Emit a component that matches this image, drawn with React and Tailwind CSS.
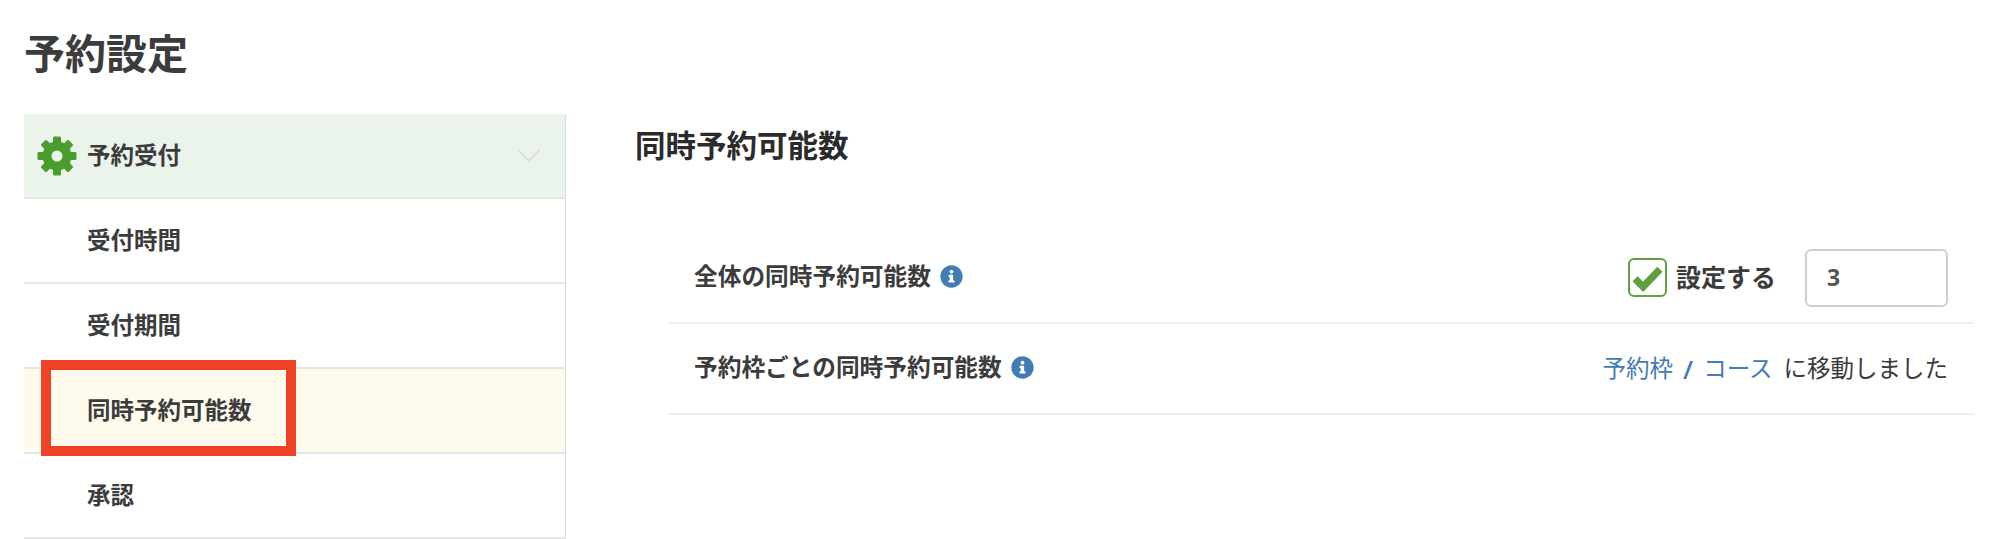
import { ChevronDown } from 'lucide-react'

const FONT = "font-['Open_Sans','Noto_Sans_CJK_JP',sans-serif]"

const INFO = 'M256 8C119 8 8 119.1 8 256c0 137 111 248 248 248s248-111 248-248C504 119.1 393 8 256 8zm0 100c23.2 0 42 18.8 42 42s-18.8 42-42 42-42-18.8-42-42 18.8-42 42-42zm66 272c0 6.6-5.4 12-12 12H202c-6.6 0-12-5.4-12-12v-28c0-6.6 5.4-12 12-12h16v-70h-16c-6.6 0-12-5.4-12-12v-28c0-6.6 5.4-12 12-12h78c6.6 0 12 5.4 12 12v110h18c6.6 0 12 5.4 12 12v28z'

const TEETH = [0, 45, 90, 135, 180, 225, 270, 315]

function GearIcon() {
  return (
    <svg viewBox="0 0 40 40" className="w-[40px] h-[40px] shrink-0">
      {TEETH.map((deg) => (
        <rect key={deg} x="16" y="0.5" width="8" height="9" rx="1.5" className="fill-[#4a9d2c]" transform={`rotate(${deg} 20 20)`} />
      ))}
      <circle cx="20" cy="20" r="10" className="fill-none stroke-[#4a9d2c] stroke-[9]" />
    </svg>
  )
}

function InfoIcon() {
  return (
    <svg viewBox="0 0 512 512" className="w-[23px] h-[23px] fill-[#427bb5] shrink-0">
      <path d={INFO} />
    </svg>
  )
}

function MenuItem({ label, active }) {
  return (
    <div className={`h-[85px] flex items-center pl-[63px] border-b-2 border-[#e6e6e6] text-[23.5px] font-bold ${active ? 'bg-[#fffbec]' : 'bg-white'}`}>
      {label}
    </div>
  )
}

export default function App() {
  return (
    <div className={`${FONT} w-[1999px] h-[539px] bg-white text-[#3c3c3c] overflow-hidden`}>
      <h1 className="pl-[24px] h-[114px] pt-[28px] text-[41px] leading-[50px] font-bold">予約設定</h1>
      <div className="flex">
        <div className="relative w-[542px] ml-[24px] border-r border-[#dcdcdc]">
          <div className="h-[85px] flex items-center justify-between pl-[13px] pr-[16px] bg-[#eaf4ea] border-b-2 border-[#e2e8e2]">
            <div className="flex items-center gap-[10px]">
              <GearIcon />
              <span className="text-[23.5px] font-bold">予約受付</span>
            </div>
            <ChevronDown className="w-[40px] h-[40px] text-[#dddddd]" strokeWidth={1.25} />
          </div>
          <MenuItem label="受付時間" />
          <MenuItem label="受付期間" />
          <MenuItem label="同時予約可能数" active />
          <MenuItem label="承認" />
          <div className="absolute left-[17px] top-[246px] w-[255px] h-[96px] border-[10px] border-[#ee4327]" />
        </div>

        <div className="flex-1 pl-[69px] pr-[25px]">
          <h2 className="h-[125px] pt-[11px] text-[30.5px] leading-[40px] font-bold text-[#2b2b2b]">同時予約可能数</h2>
          <div className="ml-[33px]">
            <div className="h-[85px] pb-[6px] flex items-center justify-between pl-[26px] pr-[26px] border-b-2 border-[#eeeeee]">
              <div className="flex items-center gap-[9px] pb-[1px] text-[23.7px] font-bold">
                全体の同時予約可能数
                <InfoIcon />
              </div>
              <div className="flex items-center">
                <div className="w-[39px] h-[39px] rounded-[6px] border-2 border-[#5f9f3f] flex items-center justify-center">
                  <svg viewBox="0 0 24 24" className="w-[36px] h-[36px] fill-none stroke-[#5f9f3f] stroke-[5]">
                    <path d="M3.5 12.5l5.5 5.5L20.5 6" />
                  </svg>
                </div>
                <span className="ml-[9px] text-[25px] font-bold">設定する</span>
                <div className="ml-[29px] w-[143px] h-[58px] rounded-[6px] border-2 border-[#d0d0d0] flex items-center pl-[20px] text-[23px] font-bold text-[#555555]">
                  3
                </div>
              </div>
            </div>
            <div className="h-[91px] flex items-center justify-between pl-[26px] pr-[26px] border-b-2 border-[#eeeeee]">
              <div className="flex items-center gap-[9px] pb-[2px] text-[23.7px] font-bold">
                予約枠ごとの同時予約可能数
                <InfoIcon />
              </div>
              <div className="flex items-center text-[23.5px]">
                <span className="text-[#427bb5]">予約枠</span>
                <span className="mx-[10px] text-[26px] leading-[32px] text-[#427bb5] font-semibold">/</span>
                <span className="text-[#427bb5]">コース</span>
                <span className="ml-[11px]">に移動しました</span>
              </div>
            </div>
          </div>
        </div>
      </div>
    </div>
  )
}
